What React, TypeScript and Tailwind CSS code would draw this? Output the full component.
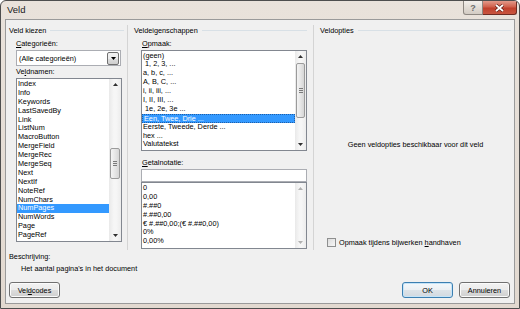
import React from "react";

function Arrow({ dir, disabled }: { dir: "up" | "down"; disabled?: boolean }) {
  return (
    <svg width="5" height="3" viewBox="0 0 5 3">
      <path d={dir === "up" ? "M0 3 L2.5 0 L5 3Z" : "M0 0 L5 0 L2.5 3Z"} fill={disabled ? "#b0b0b0" : "#303030"} />
    </svg>
  );
}

function ScrollBar({ thumbTop, thumbHeight, disabled, wide }: { thumbTop?: number; thumbHeight?: number; disabled?: boolean; wide?: boolean }) {
  return (
    <div className={(wide ? "w-[12px]" : "w-[11px]") + " flex flex-col bg-[linear-gradient(90deg,#e9e9e9,#f6f6f6_40%,#f6f6f6_60%,#ececec)]"}>
      <div className="h-[11px] flex items-center justify-center">
        <Arrow dir="up" disabled={disabled} />
      </div>
      <div className="flex-1 flex flex-col">
        {thumbHeight ? (
          <div
            style={{ marginTop: thumbTop, height: thumbHeight }}
            className="mx-[1px] rounded-[2px] border border-[#9b9b9b] bg-[linear-gradient(90deg,#f4f4f4,#e6e6e6_50%,#d6d6d6)] flex flex-col items-center justify-center gap-[1px]"
          >
            <div className="w-[4px] h-px bg-[#7a7a7a]" />
            <div className="w-[4px] h-px bg-[#7a7a7a]" />
            <div className="w-[4px] h-px bg-[#7a7a7a]" />
          </div>
        ) : null}
      </div>
      <div className="h-[11px] flex items-center justify-center">
        <Arrow dir="down" disabled={disabled} />
      </div>
    </div>
  );
}

function GroupHeader({ title }: { title: string }) {
  return (
    <div className="h-[10px] flex items-center gap-[4px]">
      <span className="whitespace-nowrap">{title}</span>
      <div className="flex-1 h-px bg-[#d8e0e6]" />
    </div>
  );
}

const veldnamen = [
  "Index",
  "Info",
  "Keywords",
  "LastSavedBy",
  "Link",
  "ListNum",
  "MacroButton",
  "MergeField",
  "MergeRec",
  "MergeSeq",
  "Next",
  "NextIf",
  "NoteRef",
  "NumChars",
  "NumPages",
  "NumWords",
  "Page",
  "PageRef",
];

const opmaak = [
  "(geen)",
  " 1, 2, 3, ...",
  "a, b, c, ...",
  "A, B, C, ...",
  "i, ii, iii, ...",
  "I, II, III, ...",
  " 1e, 2e, 3e ...",
  "Een, Twee, Drie ...",
  "Eerste, Tweede, Derde ...",
  "hex ...",
  "Valutatekst",
];

const getal = ["0", "0,00", "#.##0", "#.##0,00", "€ #.##0,00;(€ #.##0,00)", "0%", "0,00%"];

function Button({ children, def }: { children: React.ReactNode; def?: boolean }) {
  return (
    <div
      className={
        def
          ? "w-[51px] h-[16px] rounded-[3px] border border-[#3c7fb1] shadow-[inset_0_0_0_1px_#c5e4f8] bg-[linear-gradient(#f4f8fb_0%,#ecf0f3_50%,#dde3e8_51%,#d2d9df_100%)] flex items-center justify-center"
          : "w-[51px] h-[16px] rounded-[3px] border border-[#707070] shadow-[inset_0_0_0_1px_#fbfbfb] bg-[linear-gradient(#f2f2f2_0%,#ebebeb_50%,#dddddd_51%,#cfcfcf_100%)] flex items-center justify-center"
      }
    >
      {children}
    </div>
  );
}

export default function App() {
  return (
    <div className="w-[520px] h-[309px] flex flex-col border border-[#4e4e4e] rounded-t-[6px] bg-[linear-gradient(#e9e2db,#e2d9d0)] font-['Liberation_Sans',Arial,sans-serif] text-[7.3px] leading-[9px] text-black overflow-hidden">
      {/* Title bar */}
      <div className="h-[18px] flex items-start">
        <div className="pl-[6px] pt-[3px] text-[9.5px] leading-[12px] text-[#1a1a1a]">Veld</div>
        <div className="flex-1" />
        <div className="w-[20px] h-[14px] border border-t-0 border-[#8d8781] rounded-bl-[3px] bg-[linear-gradient(#f3efeb,#e2dcd5_50%,#d3ccc4)] flex items-center justify-center text-[9px] leading-[10px] font-bold text-[#6b6b6b]">
          ?
        </div>
        <div className="w-[34px] h-[14px] mr-[2px] border border-t-0 border-l-0 border-[#6e2b22] rounded-br-[3px] bg-[linear-gradient(#e39a8a,#d0604c_45%,#c0402c_55%,#c9553f)] flex items-center justify-center">
          <svg width="11" height="8" viewBox="0 0 11 8">
            <path d="M2 1 L9 7 M9 1 L2 7" stroke="#5b1d16" strokeWidth="3.2" />
            <path d="M2 1 L9 7 M9 1 L2 7" stroke="#ffffff" strokeWidth="1.8" />
          </svg>
        </div>
      </div>

      {/* Client area */}
      <div className="flex-1 mx-[4px] mb-[4px] border border-[#9a9a9a] bg-[#f0f0f0] flex flex-col">
        <div className="flex h-[225px] mt-[5px]">
          {/* Column 1 */}
          <div className="w-[121px] flex flex-col pl-[3px] pr-[3px]">
            <GroupHeader title="Veld kiezen" />
            <div className="pl-[7px] flex flex-col">
              <div className="mt-[4px]">
                <u className="underline-offset-1">C</u>ategorieën:
              </div>
              <div className="mt-[2px] w-[105px] h-[16px] border border-[#abadb3] bg-white flex items-center">
                <span className="pl-[2px] flex-1">(Alle categorieën)</span>
                <div className="w-[12px] h-[13px] mr-[1px] rounded-[2px] border border-[#707070] bg-[linear-gradient(#f2f2f2,#ebebeb_50%,#dddddd_51%,#cfcfcf)] flex items-center justify-center">
                  <svg width="5" height="3" viewBox="0 0 5 3">
                    <path d="M0 0 L5 0 L2.5 3Z" fill="#000" />
                  </svg>
                </div>
              </div>
              <div className="mt-[1px]">
                Ve<u className="underline-offset-1">l</u>dnamen:
              </div>
              <div className="mt-[2px] w-[106px] h-[164px] border border-[#828790] bg-white flex">
                <div className="flex-1 pt-[1px] flex flex-col">
                  {veldnamen.map((n) => (
                    <div
                      key={n}
                      className={
                        n === "NumPages"
                          ? "h-[8.9px] leading-[8.9px] pl-[1px] bg-[#3399ff] text-white"
                          : "h-[8.9px] leading-[8.9px] pl-[1px]"
                      }
                    >
                      {n}
                    </div>
                  ))}
                </div>
                <ScrollBar wide thumbTop={58} thumbHeight={31} />
              </div>
            </div>
          </div>

          {/* Separator */}
          <div className="w-px bg-[#d4d4d4]" />

          {/* Column 2 */}
          <div className="w-[185px] flex flex-col pl-[6px] pr-[6px]">
            <GroupHeader title="Veldeigenschappen" />
            <div className="pl-[7px] flex flex-col">
              <div className="mt-[4px] pl-[1px]">
                <u className="underline-offset-1">O</u>pmaak:
              </div>
              <div className="mt-[2px] w-[166px] h-[101px] border border-[#828790] bg-white flex">
                <div className="flex-1 pt-[0.5px] flex flex-col">
                  {opmaak.map((n) => (
                    <div
                      key={n}
                      className={
                        n === "Een, Twee, Drie ..."
                          ? "h-[8.9px] leading-[7px] pl-[1px] whitespace-pre bg-[#3399ff] text-white border border-dotted border-[#1e5ea8]"
                          : "h-[8.9px] leading-[8.9px] pl-[1px] whitespace-pre"
                      }
                    >
                      {n}
                    </div>
                  ))}
                </div>
                <ScrollBar thumbTop={1} thumbHeight={55} />
              </div>
              <div className="mt-[7px] pl-[1px]">
                <u className="underline-offset-1">G</u>etalnotatie:
              </div>
              <div className="mt-[2px] w-[166px] h-[13px] border border-[#abadb3] bg-white" />
              <div className="w-[166px] h-[67px] border border-[#828790] bg-white flex">
                <div className="flex-1 pt-[1px] flex flex-col">
                  {getal.map((n) => (
                    <div key={n} className="h-[8.9px] leading-[8.9px] pl-[1px] whitespace-pre">
                      {n}
                    </div>
                  ))}
                </div>
                <ScrollBar disabled />
              </div>
            </div>
          </div>

          {/* Separator */}
          <div className="w-px bg-[#d4d4d4]" />

          {/* Column 3 */}
          <div className="flex-1 flex flex-col pl-[6px] pr-[3px]">
            <GroupHeader title="Veldopties" />
            <div className="mt-[105px] text-center">Geen veldopties beschikbaar voor dit veld</div>
            <div className="mt-auto mb-[3px] pl-[7px] flex items-center gap-[3px]">
              <div className="w-[9px] h-[9px] border border-[#8e8f8f] bg-[linear-gradient(135deg,#dcdcdc,#f7f7f7)]" />
              <span>
                Opmaak tijdens bijwerken <u className="underline-offset-1">h</u>andhaven
              </span>
            </div>
          </div>
        </div>

        {/* Footer */}
        <div className="mt-[2px] pl-[3px]">Beschrijving:</div>
        <div className="mt-[3px] pl-[15px]">Het aantal pagina's in het document</div>
        <div className="mt-[9px] pl-[3px] pr-[4px] flex items-center">
          <Button>
            <span>
              Vel<u className="underline-offset-1">d</u>codes
            </span>
          </Button>
          <div className="flex-1" />
          <Button def>OK</Button>
          <div className="w-[6px]" />
          <Button>Annuleren</Button>
        </div>
      </div>
    </div>
  );
}
